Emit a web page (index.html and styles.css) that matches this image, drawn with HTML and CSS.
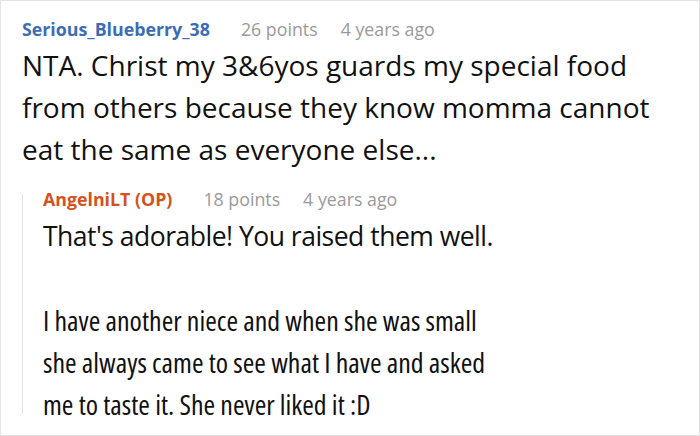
FILE: index.html
```html
<!DOCTYPE html>
<html>
<head>
<meta charset="utf-8">
<link rel="stylesheet" href="styles.css">
</head>
<body>
<div class="card">
  <div class="comment">
    <div class="head">
      <span class="user">Serious_Blueberry_38</span>
      <span class="meta first">26 points</span>
      <span class="meta">4 years ago</span>
    </div>
    <div class="text">NTA. Christ my 3&amp;6yos guards my special food from others because they know momma cannot eat the same as everyone else...</div>
  </div>
  <div class="reply">
    <div class="head">
      <span class="user op">AngelniLT (OP)</span>
      <span class="meta first">18 points</span>
      <span class="meta">4 years ago</span>
    </div>
    <div class="text">
      <p class="p1">That's adorable! You raised them well.</p>
      <p class="p2">I have another niece and when she was small she always came to see what I have and asked me to taste it. She never liked it :D</p>
    </div>
  </div>
</div>
</body>
</html>
```

FILE: styles.css
```css
html, body {
  margin: 0;
  padding: 0;
  background: #fff;
}
.card {
  box-sizing: border-box;
  width: 700px;
  height: 436px;
  border: 1px solid #e4e4e4;
  padding: 0 39px 0 21px;
  overflow: hidden;
  font-family: "Open Sans", "Noto Sans", sans-serif;
  color: #111;
}
.head {
  display: flex;
  font-size: 17.8px;
  line-height: 20px;
  white-space: nowrap;
}
.comment .head {
  margin-top: 18px;
}
.user {
  font-weight: bold;
  color: #3c6db4;
}
.user.op {
  color: #d5521d;
}
.meta {
  color: #9a9a9a;
  margin-left: 23px;
}
.meta.first {
  margin-left: 31px;
}
.text {
  font-size: 28px;
  line-height: 42px;
}
.comment .text {
  margin-top: 5px;
}
.text p {
  margin: 0;
}
.reply {
  margin-top: 24px;
  border-left: 1px solid #e2e2e2;
  padding-left: 20px;
  height: 220px;
}
.reply .head {
  line-height: 10px;
}
.reply .text {
  margin-top: 11px;
  width: 462px;
}
.reply .p1 {
  margin-bottom: 42px;
  font-size: 26.5px;
  letter-spacing: -0.5px;
}
.reply .p2 {
  font-stretch: 75%;
}
```
